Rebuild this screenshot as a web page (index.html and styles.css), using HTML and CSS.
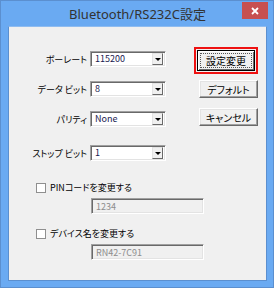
FILE: index.html
```html
<!DOCTYPE html>
<html lang="ja">
<head>
    <meta charset="UTF-8">
    <title>Bluetooth/RS232C設定</title>
    <link rel="stylesheet" href="styles.css">
</head>
<body>
    <div class="window">
        <div class="titlebar">
            <span class="title">Bluetooth/RS232C設定</span>
            <span class="close">
                <svg width="8" height="8" viewBox="0 0 8 8"><path d="M1 1L7 7M7 1L1 7" stroke="#fff" stroke-width="1.8"/></svg>
            </span>
        </div>

        <div class="client">
            <div class="top">
                <div class="fields">
                    <span class="lbl">ボーレート</span>
                    <div class="combo"><span class="val">115200</span><span class="arrow"></span></div>
                    <span class="lbl">データ ビット</span>
                    <div class="combo"><span class="val">8</span><span class="arrow"></span></div>
                    <span class="lbl">パリティ</span>
                    <div class="combo"><span class="val">None</span><span class="arrow"></span></div>
                    <span class="lbl stop">ストップ ビット</span>
                    <div class="combo stop"><span class="val">1</span><span class="arrow"></span></div>
                </div>

                <div class="buttons">
                    <!-- 赤枠で強調したボタン -->
                    <div class="mark"><button class="btn focused"><span>設定変更</span></button></div>
                    <button class="btn">デフォルト</button>
                    <button class="btn">キャンセル</button>
                </div>
            </div>

            <div class="option"><span class="check"></span><span>PINコードを変更する</span></div>
            <div class="textbox">1234</div>
            <div class="option"><span class="check"></span><span>デバイス名を変更する</span></div>
            <div class="textbox">RN42-7C91</div>
        </div>
    </div>
</body>
</html>
```

FILE: styles.css
```css
* {
    margin: 0;
    padding: 0;
    box-sizing: border-box;
}
body {
    width: 274px;
    height: 288px;
    font-family: "Noto Sans CJK JP", "Noto Sans", sans-serif;
    font-feature-settings: "palt";
    font-size: 9px;
    color: #000;
    background: #fff;
}
.window {
    width: 274px;
    height: 288px;
    background: #6aaaf2;
    border: 1px solid #5b8fcf;
    padding: 0 6px 6px 7px;
    display: flex;
    flex-direction: column;
}
.titlebar {
    height: 25px;
    position: relative;
    text-align: center;
}
.title {
    font-family: "Noto Sans", "Noto Sans CJK JP", sans-serif;
    font-size: 13px;
    line-height: 27px;
    color: #333;
    font-feature-settings: normal;
}
.close {
    position: absolute;
    top: 1px;
    right: -1px;
    width: 26px;
    height: 17px;
    background: #c75050;
    display: flex;
    align-items: center;
    justify-content: center;
}
.client {
    flex: 1;
    background: #f0f0f0;
    border: 1px solid #5b8fcf;
    border-top-color: #8fbcf0;
    padding-top: 24px;
}
.top {
    display: flex;
}
.fields {
    display: grid;
    grid-template-columns: 78px 76px;
    column-gap: 3px;
    row-gap: 14px;
    align-items: center;
}
.lbl {
    text-align: right;
    white-space: nowrap;
}
.fields .stop {
    margin-top: 4px;
}
.combo {
    height: 16px;
    background: #fff;
    border: 1px solid;
    border-color: #a0a0a0 #fff #fff #a0a0a0;
    box-shadow: inset 1px 1px 0 #696969, inset -1px -1px 0 #e3e3e3;
    display: flex;
    align-items: center;
    padding: 2px;
}
.combo .val {
    flex: 1;
    padding-left: 2px;
    color: #1a1a50;
    line-height: 12px;
}
.arrow {
    width: 11px;
    height: 12px;
    background: #f0f0f0;
    border: 1px solid;
    border-color: #e3e3e3 #696969 #696969 #e3e3e3;
    display: flex;
    align-items: center;
    justify-content: center;
}
.arrow::after {
    content: "";
    border-left: 3px solid transparent;
    border-right: 3px solid transparent;
    border-top: 3px solid #000;
}
.buttons {
    margin-left: 28px;
    margin-top: -4px;
    display: flex;
    flex-direction: column;
    gap: 10px;
    align-items: flex-end;
}
.mark {
    width: 64px;
    height: 27px;
    border: 2px solid #ee1111;
    padding: 1px;
    margin-bottom: -4px;
}
.btn {
    width: 59px;
    height: 18px;
    font-family: inherit;
    font-size: 10px;
    font-feature-settings: "palt";
    background: #f0f0f0;
    border: 1px solid;
    border-color: #fff #696969 #696969 #fff;
    box-shadow: inset -1px -1px 0 #a0a0a0, inset 1px 1px 0 #e3e3e3;
    color: #000;
}
.mark .btn {
    width: 100%;
    height: 100%;
    border: 1px solid #000;
    box-shadow: inset 1px 1px 0 #fff, inset -1px -1px 0 #696969;
    padding: 2px;
}
.mark .btn span {
    display: block;
    height: 100%;
    border: 1px dotted #555;
    line-height: 13px;
}
.option {
    margin: 21px 0 0 27px;
    display: flex;
    align-items: center;
    gap: 4px;
    line-height: 12px;
}
.option + .textbox {
    margin-top: 4px;
}
.textbox + .option {
    margin-top: 14px;
}
.check {
    width: 10px;
    height: 10px;
    background: #fff;
    border: 1px solid #8f8f8f;
}
.textbox {
    margin-left: 82px;
    width: 113px;
    height: 16px;
    border: 1px solid;
    border-color: #a0a0a0 #fff #fff #a0a0a0;
    box-shadow: inset 1px 1px 0 #696969, inset -1px -1px 0 #e3e3e3;
    color: #8d8d8d;
    padding: 2px 4px;
    line-height: 12px;
}
```
